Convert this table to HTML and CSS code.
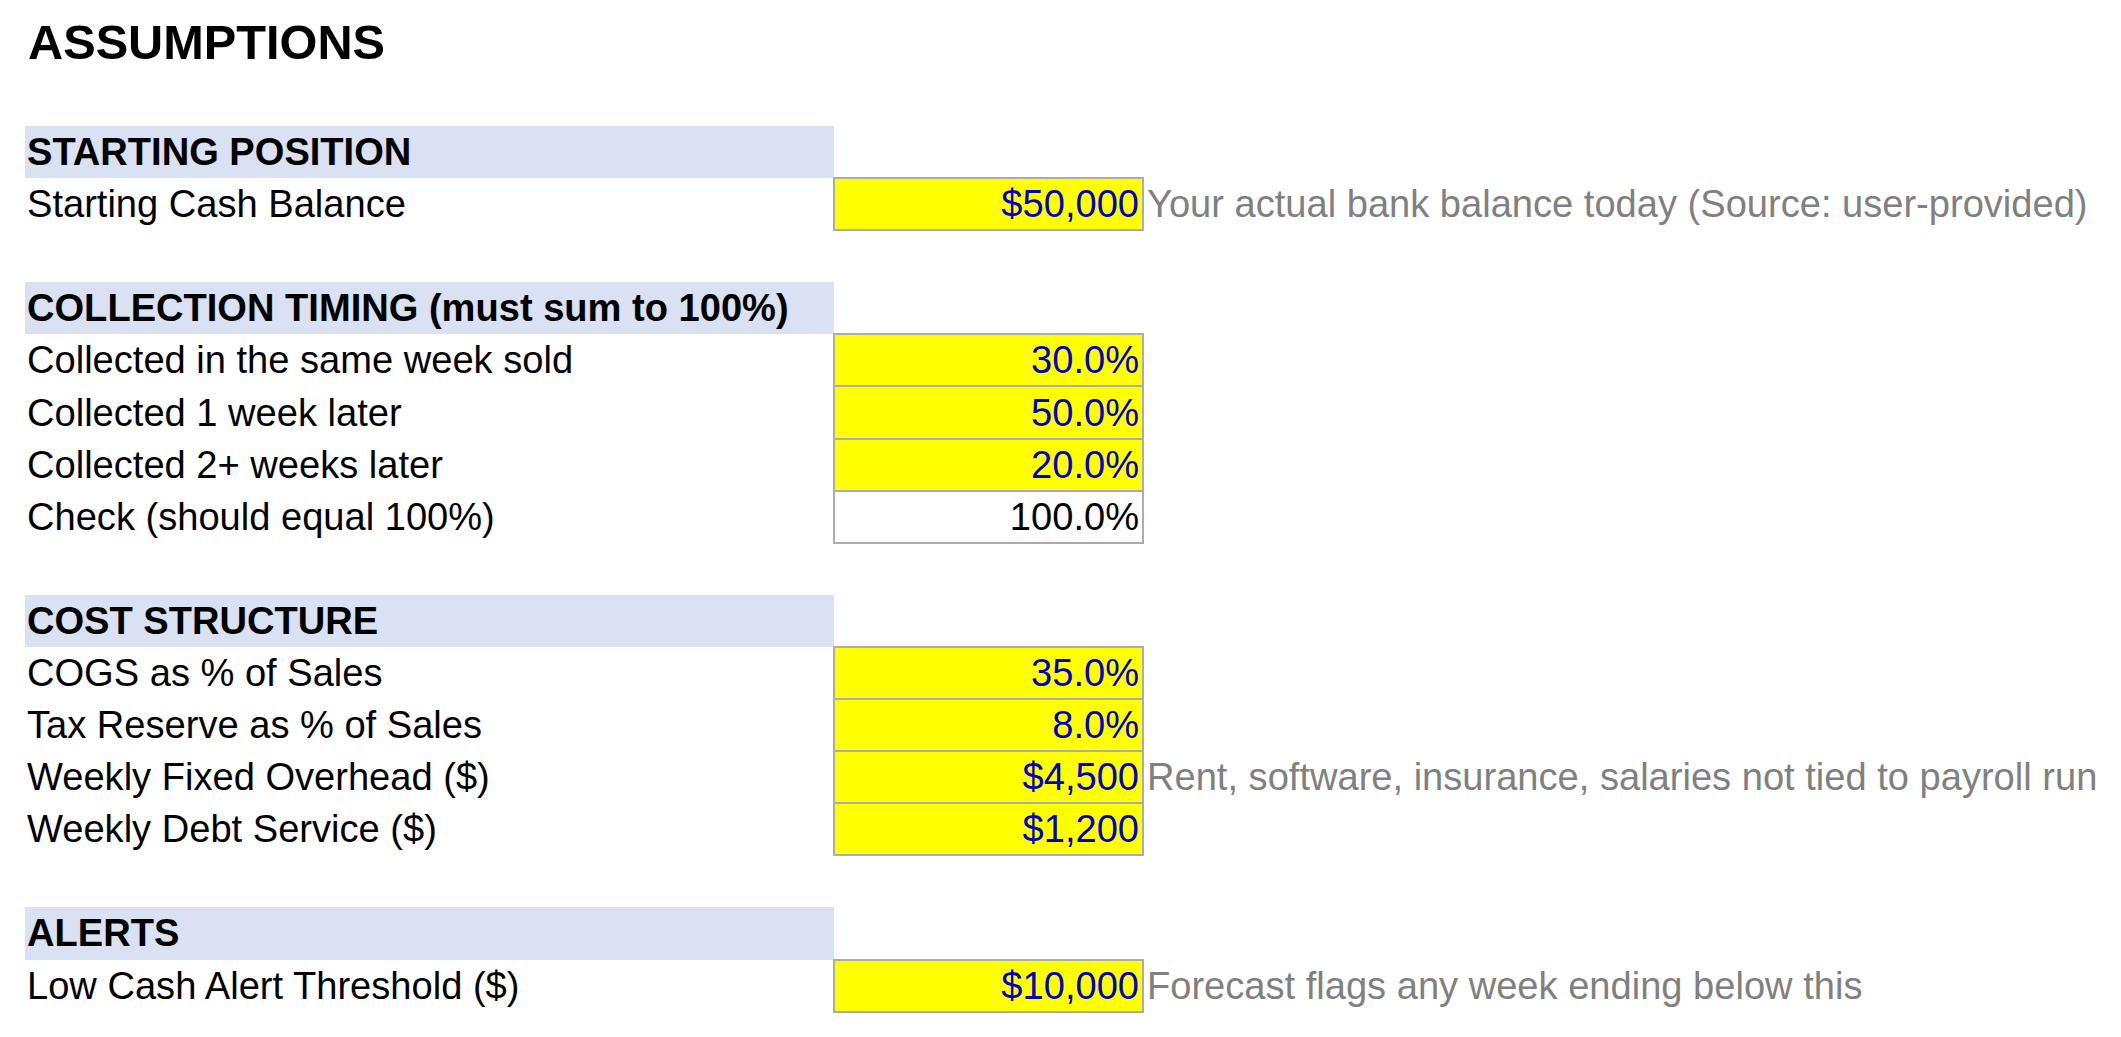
FILE: index.html
```html
<!DOCTYPE html>
<html lang="en">
<head>
<meta charset="utf-8">
<title>Assumptions</title>
<link rel="stylesheet" href="styles.css">
</head>
<body>
<div class="sheet">
  <h1 class="title">ASSUMPTIONS</h1>
  <table class="grid">
    <colgroup>
      <col class="col-label">
      <col class="col-value">
      <col class="col-note">
    </colgroup>
    <tbody>
      <tr><td class="band">STARTING POSITION</td><td></td><td></td></tr>
      <tr><td class="label">Starting Cash Balance</td><td class="input">$50,000</td><td class="note">Your actual bank balance today (Source: user-provided)</td></tr>
      <tr><td></td><td></td><td></td></tr>
      <tr><td class="band">COLLECTION TIMING (must sum to 100%)</td><td></td><td></td></tr>
      <tr><td class="label">Collected in the same week sold</td><td class="input">30.0%</td><td></td></tr>
      <tr><td class="label">Collected 1 week later</td><td class="input">50.0%</td><td></td></tr>
      <tr><td class="label">Collected 2+ weeks later</td><td class="input">20.0%</td><td></td></tr>
      <tr><td class="label">Check (should equal 100%)</td><td class="calc">100.0%</td><td></td></tr>
      <tr><td></td><td></td><td></td></tr>
      <tr><td class="band">COST STRUCTURE</td><td></td><td></td></tr>
      <tr><td class="label">COGS as % of Sales</td><td class="input">35.0%</td><td></td></tr>
      <tr><td class="label">Tax Reserve as % of Sales</td><td class="input">8.0%</td><td></td></tr>
      <tr><td class="label">Weekly Fixed Overhead ($)</td><td class="input">$4,500</td><td class="note">Rent, software, insurance, salaries not tied to payroll run</td></tr>
      <tr><td class="label">Weekly Debt Service ($)</td><td class="input">$1,200</td><td></td></tr>
      <tr><td></td><td></td><td></td></tr>
      <tr><td class="band">ALERTS</td><td></td><td></td></tr>
      <tr><td class="label">Low Cash Alert Threshold ($)</td><td class="input">$10,000</td><td class="note">Forecast flags any week ending below this</td></tr>
    </tbody>
  </table>
</div>
</body>
</html>
```

FILE: styles.css
```css
html, body {
  margin: 0;
  padding: 0;
  background: #ffffff;
}

body {
  font-family: "Liberation Sans", Arial, sans-serif;
  color: #000000;
}

.sheet {
  padding-left: 25px;
}

.title {
  margin: 0;
  height: 126px;
  box-sizing: border-box;
  padding: 15px 0 0 3px;
  font-size: 48.7px;
  line-height: 55px;
  font-weight: bold;
}

.grid {
  border-collapse: collapse;
  table-layout: fixed;
  width: 2096px;
  font-size: 38.1px;
}

.col-label { width: 809px; }
.col-value { width: 309px; }
.col-note { width: 978px; }

.grid tr {
  height: 52.1px;
}

.grid td {
  padding: 0 2px;
  line-height: 46px;
  vertical-align: middle;
  white-space: nowrap;
  overflow: visible;
}

.band {
  background: #d9e1f2;
  font-weight: bold;
}

.input,
.calc {
  border: 2px solid #acacac;
  text-align: right;
  padding-right: 3px !important;
}

.input {
  background: #ffff00;
  color: #0000cc;
}

.calc {
  background: #ffffff;
  color: #000000;
}

.note {
  color: #808080;
  padding-left: 3px !important;
}
```
